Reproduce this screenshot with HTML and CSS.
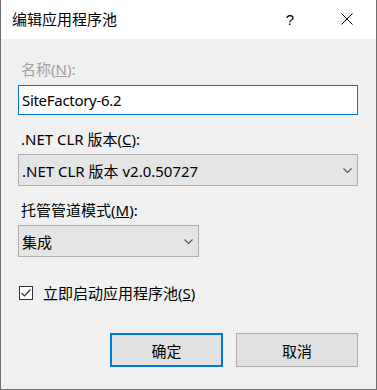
FILE: index.html
```html
<!DOCTYPE html>
<html lang="zh-CN">
<head>
<meta charset="utf-8">
<title>编辑应用程序池</title>
<link rel="stylesheet" href="styles.css">
</head>
<body>
<div class="dialog">
  <div class="titlebar">
    <span class="title">编辑应用程序池</span>
    <div class="title-buttons">
      <span class="help">?</span>
      <svg class="close" width="12" height="12" viewBox="0 0 12 12"><path d="M0.5 0.5 L11.5 11.5 M11.5 0.5 L0.5 11.5" stroke="#000" stroke-width="1" fill="none"/></svg>
    </div>
  </div>
  <div class="content">
    <div class="label disabled">名称(<u>N</u>):</div>
    <div class="textbox">SiteFactory-6.2</div>

    <div class="label label-gap">.NET CLR 版本(<u>C</u>):</div>
    <div class="combo combo-wide">
      <span>.NET CLR 版本 v2.0.50727</span>
      <svg class="chev" width="9" height="5" viewBox="0 0 9 5"><path d="M0.5 0.5 L4.5 4.5 L8.5 0.5" stroke="#555" stroke-width="1.1" fill="none"/></svg>
    </div>

    <div class="label label-gap">托管管道模式(<u>M</u>):</div>
    <div class="combo combo-narrow">
      <span>集成</span>
      <svg class="chev" width="9" height="5" viewBox="0 0 9 5"><path d="M0.5 0.5 L4.5 4.5 L8.5 0.5" stroke="#555" stroke-width="1.1" fill="none"/></svg>
    </div>

    <div class="check-row">
      <svg class="checkbox" width="14" height="14" viewBox="0 0 14 14"><rect x="0.5" y="0.5" width="13" height="13" fill="#fff" stroke="#333"/><path d="M2.5 7 L5.5 10 L11.5 3.5" stroke="#333" stroke-width="1.2" fill="none"/></svg>
      <span>立即启动应用程序池(<u>S</u>)</span>
    </div>

    <div class="buttons">
      <div class="btn btn-default">确定</div>
      <div class="btn btn-cancel">取消</div>
    </div>
  </div>
</div>
</body>
</html>
```
FILE: styles.css
```css
html, body {
  margin: 0;
  padding: 0;
  background: #f0f0f0;
}
body {
  font-family: "Noto Sans", "Noto Sans CJK SC", sans-serif;
  font-size: 15px;
  color: #000;
}
.dialog {
  width: 377px;
  height: 390px;
  box-sizing: border-box;
  border: 1px solid #6e6e6e;
  border-top: none;
  background: #f0f0f0;
  display: flex;
  flex-direction: column;
}
.titlebar {
  height: 39px;
  background: #fff;
  display: flex;
  align-items: center;
  justify-content: space-between;
  padding-left: 11px;
  padding-bottom: 1px;
  box-sizing: border-box;
}
.title {
  font-size: 15px;
  line-height: 20px;
}
.title-buttons {
  display: flex;
  align-items: center;
  height: 100%;
}
.help {
  font-family: "Liberation Sans", sans-serif;
  font-size: 15px;
  width: 46px;
  text-align: center;
  margin-right: 28px;
}
.close {
  margin-right: 23px;
}
.content {
  padding: 20px 18px 0 17px;
  display: flex;
  flex-direction: column;
}
.label {
  line-height: 20px;
  height: 20px;
  padding-left: 3px;
}
.label-gap {
  margin-top: 14px;
}
.disabled {
  color: #a0a0a0;
}
.textbox {
  margin-top: 6px;
  height: 30px;
  box-sizing: border-box;
  border: 1px solid #0078d7;
  background: #fff;
  padding-left: 3px;
  line-height: 28px;
  letter-spacing: -0.3px;
}
.combo {
  margin-top: 5px;
  height: 32px;
  box-sizing: border-box;
  border: 1px solid #adadad;
  background: #e5e5e5;
  padding: 0 5px 0 3px;
  display: flex;
  align-items: center;
  justify-content: space-between;
}
.combo-narrow {
  width: 181px;
}
.chev {
  margin-top: 1px;
}
.check-row {
  margin-top: 26px;
  height: 20px;
  display: flex;
  align-items: center;
  line-height: 20px;
}
.checkbox {
  margin-left: 1px;
  margin-right: 10px;
}
.buttons {
  margin-top: 30px;
  display: flex;
  justify-content: flex-end;
  gap: 13px;
}
.btn {
  height: 34px;
  box-sizing: border-box;
  border: 1px solid #adadad;
  background: #e1e1e1;
  display: flex;
  align-items: center;
  justify-content: center;
}
.btn-default {
  width: 113px;
  border: 2px solid #0078d7;
}
.btn-cancel {
  width: 122px;
}
```
